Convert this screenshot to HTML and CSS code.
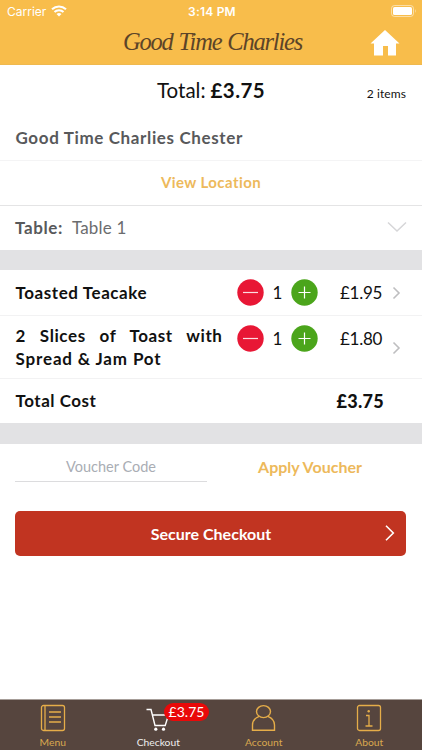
FILE: index.html
```html
<!DOCTYPE html>
<html lang="en">
<head>
<meta charset="utf-8">
<title>Checkout</title>
<link rel="stylesheet" href="styles.css">
</head>
<body>
<div class="app">
  <header class="header">
    <div class="status">
      <div class="carrier"><span class="carrier-name">Carrier</span>
        <svg width="16" height="12" viewBox="0 0 16 12" fill="none" stroke="#fff" stroke-width="2"><path d="M1 4.3C5 .5 11 .5 15 4.3M3.5 7C6 4.5 10 4.5 12.5 7"/><path d="M5.5 9Q8 6.8 10.5 9L8 11.5Z" fill="#fff" stroke="none"/></svg>
      </div>
      <span class="time">3:14 PM</span>
      <svg class="battery" width="26" height="12" viewBox="0 0 26 12"><rect x=".5" y=".5" width="22" height="11" rx="3" fill="none" stroke="#fff" stroke-opacity=".5"/><rect x="2" y="2" width="19" height="8" rx="1.6" fill="#fff"/><path d="M24 4Q25.5 6 24 8Z" fill="#fff" fill-opacity=".6"/></svg>
    </div>
    <div class="brandbar">
      <h1 class="brand">Good Time Charlies</h1>
      <svg class="home" width="30" height="27" viewBox="0 0 30 27" fill="#fff"><path d="M15 0L29.5 13.5H26V25.5H18V16H13V25.5H4V13.5H.5Z"/></svg>
    </div>
  </header>

  <main class="content">
    <section class="summary">
      <div class="total"><span class="total-label">Total:</span><strong class="total-value">£3.75</strong></div>
      <span class="count">2 items</span>
    </section>
    <h2 class="venue"><span>Good Time Charlies Chester</span></h2>
    <a class="location"><span>View Location</span></a>
    <div class="table-row">
      <span class="table-label">Table:</span><span class="table-value">Table 1</span>
      <svg class="down" width="20" height="12" viewBox="0 0 20 12" fill="none" stroke="#d6d6d8" stroke-width="1.5"><path d="M1 1.5L10 10L19 1.5"/></svg>
    </div>
    <div class="band"></div>

    <section class="items">
      <div class="item first">
        <span class="name"><span class="teacake">Toasted Teacake</span></span>
        <div class="stepper">
          <svg width="27" height="27" viewBox="0 0 27 27"><circle cx="13.5" cy="13.5" r="13.2" fill="#e81735"/><path d="M6 13.5H21" stroke="#fff" stroke-opacity=".85" stroke-width="1.2"/></svg>
          <span class="qty">1</span>
          <svg width="27" height="27" viewBox="0 0 27 27"><circle cx="13.5" cy="13.5" r="13.2" fill="#4ba51b"/><path d="M7.5 13.5H19.5M13.5 7.5V19.5" stroke="#fff" stroke-width="1.2"/></svg>
        </div>
        <span class="price">£1.95</span>
        <svg class="next" width="9" height="14" viewBox="0 0 9 14" fill="none" stroke="#bebec0" stroke-width="1.6"><path d="M1.5 1.5L7 7L1.5 12.5"/></svg>
      </div>
      <div class="item second">
        <span class="name"><span class="justify">2 Slices of Toast with</span><span class="spread">Spread &amp; Jam Pot</span></span>
        <div class="stepper">
          <svg width="27" height="27" viewBox="0 0 27 27"><circle cx="13.5" cy="13.5" r="13.2" fill="#e81735"/><path d="M6 13.5H21" stroke="#fff" stroke-opacity=".85" stroke-width="1.2"/></svg>
          <span class="qty">1</span>
          <svg width="27" height="27" viewBox="0 0 27 27"><circle cx="13.5" cy="13.5" r="13.2" fill="#4ba51b"/><path d="M7.5 13.5H19.5M13.5 7.5V19.5" stroke="#fff" stroke-width="1.2"/></svg>
        </div>
        <span class="price">£1.80</span>
        <svg class="next" width="9" height="14" viewBox="0 0 9 14" fill="none" stroke="#bebec0" stroke-width="1.6"><path d="M1.5 1.5L7 7L1.5 12.5"/></svg>
      </div>
      <div class="cost"><span class="cost-label">Total Cost</span><strong class="cost-value">£3.75</strong></div>
    </section>
    <div class="band tall"></div>

    <section class="voucher">
      <div class="field"><span>Voucher Code</span></div>
      <a class="apply"><span>Apply Voucher</span></a>
    </section>
    <div class="checkout"><span class="checkout-text">Secure Checkout</span>
      <svg class="go" width="10" height="16" viewBox="0 0 10 16" fill="none" stroke="#fff" stroke-width="1.6"><path d="M1 .8L8.3 8L1 15.2"/></svg>
    </div>
  </main>

  <nav class="tabs">
    <div class="tab">
      <svg width="26" height="28" viewBox="0 0 26 28" fill="none" stroke="#e5ad49" stroke-width="1.3"><rect x="1.5" y="1.5" width="23" height="25" rx="2"/><path d="M5 1.5V26.5M9 8H21M9 13H21M9 18H21"/></svg>
      <span class="t-menu">Menu</span>
    </div>
    <div class="tab active">
      <svg width="26" height="28" viewBox="0 0 26 28" fill="none" stroke="#fff" stroke-width="1.4"><path d="M1.5 5.5H6L10 21.5H20.2L23.5 11H7.4"/><circle cx="10.8" cy="25.2" r="1.6" fill="#fff" stroke="none"/><circle cx="18.5" cy="25.2" r="1.6" fill="#fff" stroke="none"/></svg>
      <span class="t-check">Checkout</span>
      <b class="badge"><span>£3.75</span></b>
    </div>
    <div class="tab">
      <svg width="26" height="28" viewBox="0 0 26 28" fill="none" stroke="#e5ad49" stroke-width="1.4"><ellipse cx="12.5" cy="7.6" rx="7" ry="6"/><path d="M8.2 12.4C4 14 1.5 17.4 1.5 21V26.3H23.5V21C23.5 17.4 21 14 16.8 12.4"/></svg>
      <span class="t-account">Account</span>
    </div>
    <div class="tab">
      <svg width="26" height="28" viewBox="0 0 26 28" fill="none" stroke="#e5ad49" stroke-width="1.3"><rect x="1.5" y="1.5" width="23" height="25" rx="2"/><path d="M10 11.5H13V21.5M9.5 22H16.5"/><circle cx="12.7" cy="7.3" r="1.2" fill="#e5ad49" stroke="none"/></svg>
      <span class="t-about">About</span>
    </div>
  </nav>
</div>
</body>
</html>
```
FILE: styles.css
```css
* { box-sizing: border-box; }
body { margin: 0; font-family: Lato, "Open Sans", sans-serif; color: #111; background: #fff; }
svg { display: block; flex: none; }
span, strong, h1, h2 { white-space: nowrap; }
.app { width: 422px; height: 750px; display: flex; flex-direction: column; overflow: hidden; }
.header { height: 65px; background: #f8bd4b; border-bottom: 1px solid #efb94f; }
.status { height: 22px; display: grid; grid-template-columns: 1fr auto 1fr; align-items: center; padding: 0 5px 0 7px; color: #fff; font-family: Inter, sans-serif; }
.carrier { display: flex; align-items: center; gap: 5px; font-size: 12px; }
.time { font-size: 12px; font-weight: 600; letter-spacing: .2px; }
.battery { justify-self: end; }
.brandbar { height: 43px; display: grid; grid-template-columns: 1fr auto 1fr; align-items: center; padding-right: 22px; padding-left: 25px; }
.brand { grid-column: 2; margin: 0; padding-bottom: 3px; font: italic 400 24.5px "Liberation Serif", serif; color: #5c4428; letter-spacing: -1.2px; word-spacing: 1px; }
.home { justify-self: end; }
.content { flex: 1; }
.summary { height: 50px; display: grid; grid-template-columns: 1fr auto 1fr; align-items: center; padding: 0 16px; }
.total { grid-column: 2; font-size: 20.5px; display: flex; gap: 5px; }
.total-value { letter-spacing: .4px; }
.count { justify-self: end; font-size: 12px; padding-top: 6px; letter-spacing: .1px; }
.venue { height: 46px; margin: 0; padding: 0 15.5px; display: flex; align-items: center; font-size: 17px; letter-spacing: .63px; color: #58595b; border-bottom: 1px solid #f4f4f5; }
.location { height: 45px; display: flex; align-items: center; justify-content: center; padding-bottom: 2px; font-size: 15px; letter-spacing: .42px; font-weight: 700; color: #edb95b; border-bottom: 1px solid #e4e4e5; }
.table-row { height: 44px; display: flex; align-items: center; padding: 0 15px 2px; font-size: 17px; color: #6b6c6e; }
.table-label { font-weight: 700; letter-spacing: .6px; color: #58595b; margin-right: 9px; }
.table-value { letter-spacing: .2px; }
.down { margin-left: auto; }
.band { height: 20px; background: #e2e2e4; }
.tall { height: 21px; }
.item { display: grid; grid-template-columns: 207px 96px 1fr 9px; padding: 0 21px 0 15.5px; border-bottom: 1px solid #f2f2f3; font-size: 17px; }
.item .stepper { margin-left: 14.5px; width: 81px; }
.first { height: 46px; align-items: center; }
.second { height: 63px; align-items: start; padding-top: 9px; }
.name { font-weight: 700; line-height: 23px; letter-spacing: .58px; color: #111; }
.second .name { margin-top: -1px; }
.spread { letter-spacing: .85px; }
.justify { display: block; text-align: justify; text-align-last: justify; white-space: normal; }
.stepper { display: flex; align-items: center; justify-content: space-between; }
.price { text-align: right; padding-right: 10px; line-height: 27px; letter-spacing: -.3px; }
.second .next { margin-top: 16px; }
.cost { height: 44px; display: flex; align-items: center; justify-content: space-between; padding: 0 38px 1px 15.5px; font-size: 17px; font-weight: 700; }
.cost-label { letter-spacing: .52px; }
.cost-value { font-size: 18px; letter-spacing: .3px; }
.voucher { height: 38px; display: flex; padding: 0 15px; align-items: stretch; }
.field { width: 192px; border-bottom: 1px solid #dcdcde; display: flex; align-items: center; justify-content: center; padding-top: 8px; font-size: 14.5px; color: #a9adb4; }
.apply { flex: 1; display: flex; align-items: center; justify-content: center; padding-top: 6px; padding-left: 6px; font-size: 16px; font-weight: 700; color: #edb95b; }
.checkout { height: 45px; margin: 29px 16px 0 15px; border-radius: 5px; background: #c13421; color: #fff; display: grid; grid-template-columns: 1fr auto 1fr; align-items: center; padding: 0 11px 1px 12px; font-size: 16px; font-weight: 700; }
.checkout-text { grid-column: 2; }
.go { justify-self: end; }
.tabs { height: 51px; border-top: 1px solid #a69d98; background: #56453e; display: grid; grid-template-columns: repeat(4, 1fr); }
.tab { position: relative; display: flex; flex-direction: column; align-items: center; padding-top: 4px; color: #d9a84f; font-size: 10.3px; line-height: 12px; gap: 4px; }
.active { color: #eee; }
.badge { position: absolute; left: 58.5px; top: 3px; width: 45px; height: 18px; border-radius: 9px; background: #e90909; color: #fff; display: flex; align-items: center; justify-content: center; font-size: 14px; font-weight: 400; }
```
